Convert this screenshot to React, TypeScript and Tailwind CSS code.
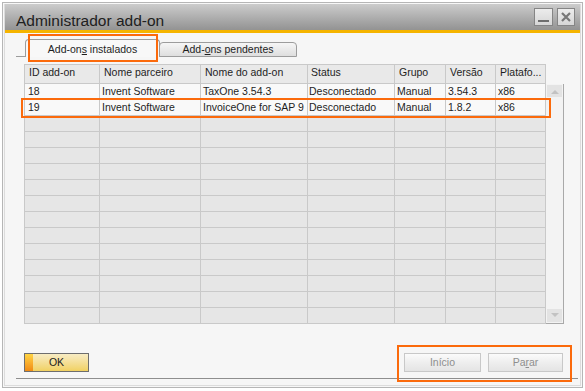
import React from "react";

const cols = [
  { w: "w-[75px]", h: "ID add-on", hp: "pl-[4px]", rp: "pl-[3px]" },
  { w: "w-[101px]", h: "Nome parceiro", hp: "pl-[4px]", rp: "pl-[2px]" },
  { w: "w-[107px]", h: "Nome do add-on", hp: "pl-[4px]", rp: "pl-[2px]" },
  { w: "w-[87px]", h: "Status", hp: "pl-[3px]", rp: "pl-[1px]" },
  { w: "w-[51px]", h: "Grupo", hp: "pl-[4px]", rp: "pl-[2px]" },
  { w: "w-[50px]", h: "Versão", hp: "pl-[4px]", rp: "pl-[2px]" },
  { w: "w-[50px]", h: "Platafo...", hp: "pl-[4px]", rp: "pl-[2px]" },
];

const rows: string[][] = [
  ["18", "Invent Software", "TaxOne 3.54.3", "Desconectado", "Manual", "3.54.3", "x86"],
  ["19", "Invent Software", "InvoiceOne for SAP 9", "Desconectado", "Manual", "1.8.2", "x86"],
];

export default function App() {
  const empty = Array.from({ length: 13 }, () => ["", "", "", "", "", "", ""]);
  const all = [...rows, ...empty];
  return (
    <div className="relative w-[585px] h-[391px] bg-white overflow-hidden font-['Liberation_Sans',Arial,sans-serif] text-[#1e1e1e]">
      {/* window */}
      <div className="ml-[2px] mt-[2px] w-[581px] h-[386px] border border-[#b6b6b6] bg-[#f7f7f7] px-[1px] pt-[1px] pb-[1px] flex flex-col">
        <div className="flex-1 flex flex-col border border-t-0 border-[#dcdcdc]">
          {/* title bar */}
          <div className="h-[26px] bg-gradient-to-b from-[#cccccc] to-[#939393] flex items-start justify-between">
            <div className="pl-[11px] pt-[8px] text-[15.5px] leading-[18px] text-[#202020]">Administrador add-on</div>
            <div className="flex gap-[4px] pt-[4px] pr-[5px]">
              <div className="w-[19px] h-[18px] border border-[#858585] bg-gradient-to-b from-[#ececec] to-[#d6d6d6] flex items-end justify-center pb-[3px]">
                <div className="w-[11px] h-[2px] bg-[#6e6e6e]" />
              </div>
              <div className="w-[18px] h-[18px] border border-[#858585] bg-gradient-to-b from-[#ececec] to-[#d6d6d6] flex items-center justify-center">
                <svg width="10" height="10" viewBox="0 0 10 10">
                  <path d="M1 1 L9 9 M9 1 L1 9" stroke="#777" strokeWidth="2.2" />
                </svg>
              </div>
            </div>
          </div>
          <div className="h-[3px] bg-[#f5b400]" />
          {/* body */}
          <div className="flex-1 flex flex-col bg-[#f6f6f6]">
            {/* tabs */}
            <div className="mt-[6px] ml-[11px] h-[18px] flex items-end text-[10.5px]">
              <div className="w-[9px] h-full border-b border-[#9c9c9c]" />
              <div className="w-[135px] h-[18px] border border-b-0 border-[#9c9c9c] rounded-t-[4px] bg-[#f8f8f8] flex items-center justify-center pt-[2px]">
                <span>
                  Add-on<span className="underline">s</span> instalados
                </span>
              </div>
              <div className="ml-[-1px] w-[138px] h-[15px] border border-[#9c9c9c] rounded-t-[4px] bg-gradient-to-b from-[#f6f6f6] to-[#dedede] flex items-center justify-center pt-[1px]">
                <span>
                  Add-<span className="underline">o</span>ns pendentes
                </span>
              </div>
            </div>
            {/* grid */}
            <div className="mt-[7px] ml-[19px] w-[540px] h-[260px] flex flex-col text-[10.5px]">
              <div className="flex h-[20px]">
                <div className="flex h-full border-l border-[#c9c9c9] bg-[#e9e9e9]">
                  {cols.map((c, i) => (
                    <div
                      key={i}
                      className={`${c.w} ${c.hp} h-full border-t border-r border-b border-[#c9c9c9] flex items-center pb-[2px] whitespace-nowrap overflow-hidden`}
                    >
                      {c.h}
                    </div>
                  ))}
                </div>
              </div>
              <div className="flex h-[240px]">
                <div className="w-[522px] h-full border-l border-[#c9c9c9] overflow-hidden">
                  {all.map((r, ri) => (
                    <div key={ri} className={`flex h-[16px] ${ri < 2 ? "bg-[#f9f9f9]" : "bg-[#e6e6e6]"}`}>
                      {cols.map((c, i) => (
                        <div
                          key={i}
                          className={`${c.w} ${c.rp} h-full border-r border-b border-[#c9c9c9] flex items-center whitespace-nowrap overflow-hidden`}
                        >
                          {r[i]}
                        </div>
                      ))}
                    </div>
                  ))}
                </div>
                <div className="w-[18px] h-full border-r border-b border-[#a9a9a9] bg-[#f3f3f3] flex flex-col justify-between py-[1px] pl-[1px] pr-[1px]">
                  <div className="h-[12px] bg-[#e3e3e3] flex items-center justify-center">
                    <svg width="8" height="5" viewBox="0 0 8 5">
                      <path d="M0 5 L4 1 L8 5 Z" fill="#c2c2c2" />
                    </svg>
                  </div>
                  <div className="h-[13px] bg-[#e3e3e3] flex items-center justify-center">
                    <svg width="8" height="5" viewBox="0 0 8 5">
                      <path d="M0 0 L4 4 L8 0 Z" fill="#c2c2c2" />
                    </svg>
                  </div>
                </div>
              </div>
            </div>
            {/* buttons */}
            <div className="mt-[29px] ml-[19px] w-[539px] h-[19px] flex justify-between text-[10.5px]">
              <div className="relative w-[65px] h-[19px] border border-[#6e6e6e] bg-gradient-to-b from-[#f8ecc4] to-[#f1d160] flex items-center justify-center">
                <div className="absolute left-0 top-0 w-[8px] h-full bg-gradient-to-b from-[#ffd443] to-[#f08a12]" />
                <span className="relative text-[#1a1a1a]">OK</span>
              </div>
              <div className="flex gap-[7px]">
                <div className="w-[77px] h-[19px] border border-[#c8c8c8] bg-gradient-to-b from-[#fbfbfb] via-[#eeeeee] to-[#e4e4e4] flex items-center justify-center text-[#8e8e8e]">
                  Início
                </div>
                <div className="w-[75px] h-[19px] border border-[#c8c8c8] bg-gradient-to-b from-[#fbfbfb] via-[#eeeeee] to-[#e4e4e4] flex items-center justify-center text-[#8e8e8e]">
                  <span>
                    Pa<span className="underline">r</span>ar
                  </span>
                </div>
              </div>
            </div>
            <div className="mt-[6px] ml-[11px] w-[562px] h-[1px] bg-[#8e8e8e]" />
          </div>
        </div>
      </div>
      {/* highlight overlays */}
      <div className="absolute left-[28px] top-[34px] w-[130px] h-[28px] border-2 border-[#fb6a0c]" />
      <div className="absolute left-[21px] top-[98px] w-[530px] h-[20px] border-2 border-[#fb6a0c]" />
      <div className="absolute left-[397px] top-[345px] w-[175px] h-[37px] border-2 border-[#fb6a0c]" />
    </div>
  );
}
